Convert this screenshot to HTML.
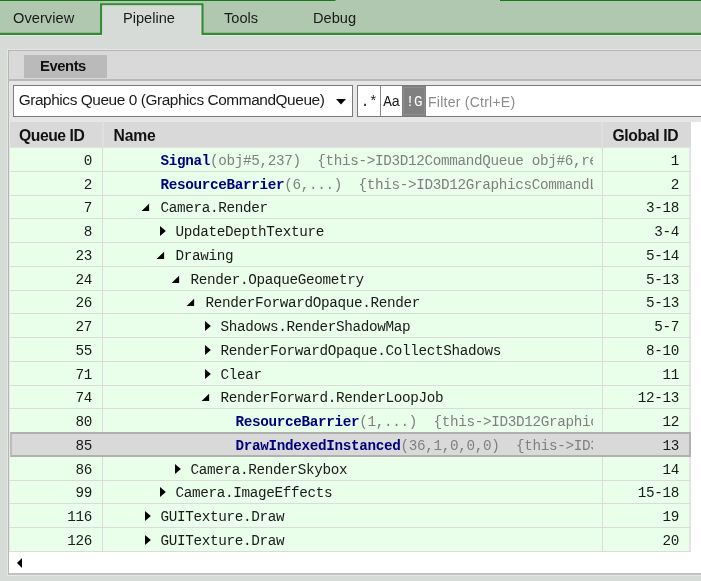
<!DOCTYPE html>
<html><head><meta charset="utf-8"><title>Pipeline</title>
<style>
*{box-sizing:border-box;margin:0;padding:0}
html,body{width:701px;height:581px;overflow:hidden}
body{background:#d7dbd7;font-family:"Liberation Sans",sans-serif;position:relative;color:#1a1a1a}
.abs{position:absolute}
#wrap{position:absolute;left:0;top:0;width:701px;height:581px;will-change:transform}
.tab{position:absolute;top:9px;font-size:14.6px;line-height:18px;color:#1a1a1a;white-space:nowrap}
#panel{position:absolute;left:8px;top:50px;width:700px;height:525px;background:#e6e6e6;border:1px solid #b6b6b6;border-bottom:2px solid #c2c2c2;box-shadow:0 0 0 1px #e4e7e4}
#evrow{position:absolute;left:9px;top:51px;width:692px;height:28px;background:#d9d9d9}
#evsep{position:absolute;left:9px;top:79px;width:692px;height:2px;background:#b9b9b9}
#evtab{position:absolute;left:24px;top:55px;width:83px;height:23px;background:#bababa;font-weight:bold;font-size:14.8px;line-height:23px;text-align:center;color:#111;letter-spacing:-0.45px;padding-right:5px}
#dd{position:absolute;left:13px;top:85px;width:340px;height:32px;background:#fff;border:1px solid #7a7a7a;font-size:15.4px;line-height:28px;padding-left:4.7px;letter-spacing:-0.42px;white-space:nowrap;color:#1a1a1a}
#filter{position:absolute;left:357px;top:85px;width:350px;height:32px;background:#fff;border:1px solid #7a7a7a}
.fb{position:absolute;top:0;height:30px;font-family:"Liberation Mono",monospace;font-size:14.3px;letter-spacing:-0.334px;line-height:32px;text-align:center;color:#1a1a1a}
#hdr{position:absolute;left:10px;top:122px;width:681px;height:26px;background:#d9d9d9;border-bottom:1px solid #e1e2e1;font-weight:bold;font-size:15.7px;line-height:26px;color:#111}
#white{position:absolute;left:9px;top:122px;width:692px;height:451px;background:#fff}
#lstrip{position:absolute;left:9px;top:122px;width:1px;height:430px;background:#e6e6e6}
.row{position:absolute;left:10px;width:681px;height:23.75px;background:#e9ffe9;border-bottom:1px solid #dadbda;font-family:"Liberation Mono",monospace;font-size:14.3px;letter-spacing:-0.334px;line-height:26px;color:#1a1a1a}
.row.sel{background:#d9d9d9;border:2px solid #b0b0b0;margin-top:-1px;height:24.75px;border-left-color:#bcbcbc}
.row.sel .q,.row.sel .n,.row.sel .gid{top:-1px}
.row.sel .q{left:-2px;border-right-color:transparent}
.row.sel .n{left:91px}
.row.sel .gid{left:590px;border-left-color:transparent;border-right:none;padding-right:12px}
.q{position:absolute;left:0;top:0;width:93px;height:100%;text-align:right;padding-right:10px;border-right:1px solid #dadbda}
.n{position:absolute;left:93px;top:0;width:489.5px;height:100%;overflow:hidden;white-space:pre}
.gid{position:absolute;left:592px;top:0;width:89px;height:100%;text-align:right;padding-right:10px;border-left:1px solid #dadbda;border-right:2px solid #e3e4e3}
.t{position:absolute;top:0;white-space:pre}
.row.up{line-height:24px}
.t b{color:#00007f}
.g{color:#808080}
.ar{position:absolute;top:7px}
</style></head><body><div id="wrap">
<svg class="abs" style="left:0;top:0" width="701" height="40" viewBox="0 0 701 40">
<rect x="0" y="0" width="701" height="33.8" fill="#b0c8b0"/>
<rect x="0" y="0" width="335.5" height="0.9" fill="#067006"/>
<rect x="500" y="0" width="201" height="0.9" fill="#067006"/>
<rect x="101.1" y="4.1" width="101.4" height="32" fill="#d7dbd7"/>
<path d="M0 35.3 H102.5 V5.6 H201.1 V35.3 H701" fill="none" stroke="#e6e9e6" stroke-width="1"/>
<path d="M0 33.85 H101.1 V4.2 H202.5 V33.85 H701" fill="none" stroke="#318c33" stroke-width="2.1" stroke-linejoin="miter"/>
</svg>
<div class="tab" style="left:13px;letter-spacing:0.05px">Overview</div>
<div class="tab" style="left:123px">Pipeline</div>
<div class="tab" style="left:224px">Tools</div>
<div class="tab" style="left:313px">Debug</div>
<div id="panel"></div>
<div id="evrow"></div>
<div id="evsep"></div>
<div id="evtab">Events</div>
<div id="dd">Graphics Queue 0 (Graphics CommandQueue)
<svg class="abs" style="left:322.3px;top:13px" width="10" height="6" viewBox="0 0 10 6"><path d="M0 0 L10 0 L5 5.4 Z" fill="#000"/></svg></div>
<div id="filter">
<div class="fb" style="left:0;width:23px;border-right:1px solid #8a8a8a">.*</div>
<div class="fb" style="left:23px;width:21px">Aa</div>
<div class="fb" style="left:44px;width:24px;background:#808080;color:#fff;box-shadow:inset 0 0 0 1px #808080,inset 0 0 0 2px #8c8c8c">!G</div>
<div class="abs" style="left:70px;top:1px;font-size:14px;letter-spacing:0.25px;line-height:30px;color:#8a8a8a;white-space:nowrap">Filter (Ctrl+E)</div>
</div>
<div id="white"></div>
<div id="lstrip"></div>
<div id="hdr">
<div class="abs" style="left:9px;top:1px;letter-spacing:-0.44px">Queue ID</div>
<div class="abs" style="left:92px;top:0;width:2px;height:26px;background:#e0e0e0"></div>
<div class="abs" style="left:103.5px;top:1px;letter-spacing:-0.2px">Name</div>
<div class="abs" style="left:591px;top:0;width:2px;height:26px;background:#e0e0e0"></div>
<div class="abs" style="left:602.4px;top:1px;letter-spacing:-0.32px">Global ID</div>
</div>
<div class="row" style="top:148.00px"><div class="q">0</div><div class="n"><span class="t" style="left:57.6px"><b>Signal</b><span class="g">(obj#5,237)  {this-&gt;ID3D12CommandQueue obj#6,re</span></span></div><div class="gid">1</div></div>
<div class="row" style="top:171.75px"><div class="q">2</div><div class="n"><span class="t" style="left:57.6px"><b>ResourceBarrier</b><span class="g">(6,...)  {this-&gt;ID3D12GraphicsCommandL</span></span></div><div class="gid">2</div></div>
<div class="row up" style="top:195.50px"><div class="q">7</div><div class="n"><svg class="ar" style="left:38.4px;top:7.8px" width="9" height="8" viewBox="0 0 9 8"><path d="M8.1 0.7 L8.1 8 L0.6 8 Z" fill="#000"/></svg><span class="t" style="left:57.6px">Camera.Render</span></div><div class="gid">3-18</div></div>
<div class="row" style="top:219.25px"><div class="q">8</div><div class="n"><svg class="ar" style="left:57.1px;top:6.8px" width="6" height="10" viewBox="0 0 6 10"><path d="M0 0 L5.8 5 L0 10 Z" fill="#000"/></svg><span class="t" style="left:72.6px">UpdateDepthTexture</span></div><div class="gid">3-4</div></div>
<div class="row" style="top:243.00px"><div class="q">23</div><div class="n"><svg class="ar" style="left:53.4px;top:7.8px" width="9" height="8" viewBox="0 0 9 8"><path d="M8.1 0.7 L8.1 8 L0.6 8 Z" fill="#000"/></svg><span class="t" style="left:72.6px">Drawing</span></div><div class="gid">5-14</div></div>
<div class="row" style="top:266.75px"><div class="q">24</div><div class="n"><svg class="ar" style="left:68.4px;top:7.8px" width="9" height="8" viewBox="0 0 9 8"><path d="M8.1 0.7 L8.1 8 L0.6 8 Z" fill="#000"/></svg><span class="t" style="left:87.6px">Render.OpaqueGeometry</span></div><div class="gid">5-13</div></div>
<div class="row up" style="top:290.50px"><div class="q">26</div><div class="n"><svg class="ar" style="left:83.4px;top:7.8px" width="9" height="8" viewBox="0 0 9 8"><path d="M8.1 0.7 L8.1 8 L0.6 8 Z" fill="#000"/></svg><span class="t" style="left:102.6px">RenderForwardOpaque.Render</span></div><div class="gid">5-13</div></div>
<div class="row" style="top:314.25px"><div class="q">27</div><div class="n"><svg class="ar" style="left:102.1px;top:6.8px" width="6" height="10" viewBox="0 0 6 10"><path d="M0 0 L5.8 5 L0 10 Z" fill="#000"/></svg><span class="t" style="left:117.6px">Shadows.RenderShadowMap</span></div><div class="gid">5-7</div></div>
<div class="row" style="top:338.00px"><div class="q">55</div><div class="n"><svg class="ar" style="left:102.1px;top:6.8px" width="6" height="10" viewBox="0 0 6 10"><path d="M0 0 L5.8 5 L0 10 Z" fill="#000"/></svg><span class="t" style="left:117.6px">RenderForwardOpaque.CollectShadows</span></div><div class="gid">8-10</div></div>
<div class="row" style="top:361.75px"><div class="q">71</div><div class="n"><svg class="ar" style="left:102.1px;top:6.8px" width="6" height="10" viewBox="0 0 6 10"><path d="M0 0 L5.8 5 L0 10 Z" fill="#000"/></svg><span class="t" style="left:117.6px">Clear</span></div><div class="gid">11</div></div>
<div class="row up" style="top:385.50px"><div class="q">74</div><div class="n"><svg class="ar" style="left:98.4px;top:7.8px" width="9" height="8" viewBox="0 0 9 8"><path d="M8.1 0.7 L8.1 8 L0.6 8 Z" fill="#000"/></svg><span class="t" style="left:117.6px">RenderForward.RenderLoopJob</span></div><div class="gid">12-13</div></div>
<div class="row" style="top:409.25px"><div class="q">80</div><div class="n"><span class="t" style="left:132.6px"><b>ResourceBarrier</b><span class="g">(1,...)  {this-&gt;ID3D12Graphic</span></span></div><div class="gid">12</div></div>
<div class="row sel" style="top:433.00px"><div class="q">85</div><div class="n"><span class="t" style="left:132.6px"><b>DrawIndexedInstanced</b><span class="g">(36,1,0,0,0)  {this-&gt;ID3</span></span></div><div class="gid">13</div></div>
<div class="row" style="top:456.75px"><div class="q">86</div><div class="n"><svg class="ar" style="left:72.1px;top:6.8px" width="6" height="10" viewBox="0 0 6 10"><path d="M0 0 L5.8 5 L0 10 Z" fill="#000"/></svg><span class="t" style="left:87.6px">Camera.RenderSkybox</span></div><div class="gid">14</div></div>
<div class="row up" style="top:480.50px"><div class="q">99</div><div class="n"><svg class="ar" style="left:57.1px;top:6.8px" width="6" height="10" viewBox="0 0 6 10"><path d="M0 0 L5.8 5 L0 10 Z" fill="#000"/></svg><span class="t" style="left:72.6px">Camera.ImageEffects</span></div><div class="gid">15-18</div></div>
<div class="row" style="top:504.25px"><div class="q">116</div><div class="n"><svg class="ar" style="left:42.1px;top:6.8px" width="6" height="10" viewBox="0 0 6 10"><path d="M0 0 L5.8 5 L0 10 Z" fill="#000"/></svg><span class="t" style="left:57.6px">GUITexture.Draw</span></div><div class="gid">19</div></div>
<div class="row" style="top:528.00px"><div class="q">126</div><div class="n"><svg class="ar" style="left:42.1px;top:6.8px" width="6" height="10" viewBox="0 0 6 10"><path d="M0 0 L5.8 5 L0 10 Z" fill="#000"/></svg><span class="t" style="left:57.6px">GUITexture.Draw</span></div><div class="gid">20</div></div>
<svg class="abs" style="left:16px;top:557px" width="8" height="12" viewBox="0 0 8 12"><path d="M6 1 L1 6 L6 11 Z" fill="#000"/></svg>
</div></body></html>
